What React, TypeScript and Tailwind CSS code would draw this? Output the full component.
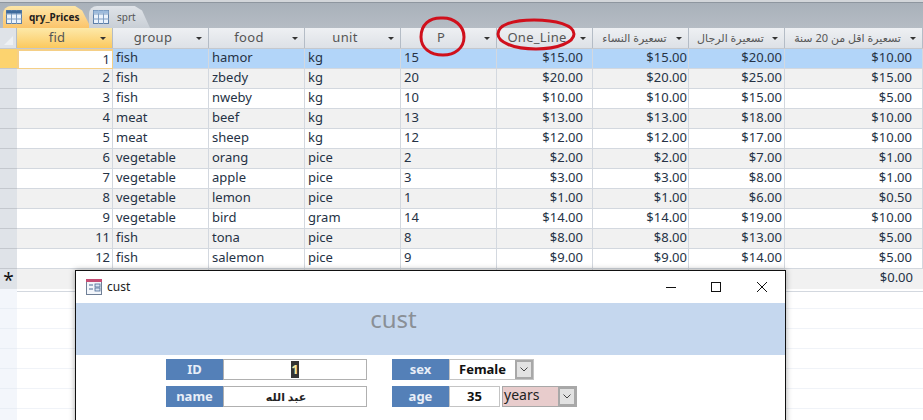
const rows = [
  [1, "fish", "hamor", "kg", "15", "$15.00", "$15.00", "$20.00", "$10.00"],
  [2, "fish", "zbedy", "kg", "20", "$20.00", "$20.00", "$25.00", "$15.00"],
  [3, "fish", "nweby", "kg", "10", "$10.00", "$10.00", "$15.00", "$5.00"],
  [4, "meat", "beef", "kg", "13", "$13.00", "$13.00", "$18.00", "$10.00"],
  [5, "meat", "sheep", "kg", "12", "$12.00", "$12.00", "$17.00", "$10.00"],
  [6, "vegetable", "orang", "pice", "2", "$2.00", "$2.00", "$7.00", "$1.00"],
  [7, "vegetable", "apple", "pice", "3", "$3.00", "$3.00", "$8.00", "$1.00"],
  [8, "vegetable", "lemon", "pice", "1", "$1.00", "$1.00", "$6.00", "$0.50"],
  [9, "vegetable", "bird", "gram", "14", "$14.00", "$14.00", "$19.00", "$10.00"],
  [11, "fish", "tona", "pice", "8", "$8.00", "$8.00", "$13.00", "$5.00"],
  [12, "fish", "salemon", "pice", "9", "$9.00", "$9.00", "$14.00", "$5.00"],
];

const headers = ["group", "food", "unit", "P", "One_Line"];
const arabicHeaders = ["تسعيرة النساء", "تسعيرة الرجال", "تسعيرة اقل من 20 سنة"];

const gridCols = "grid grid-cols-[17px_96px_96px_96px_96px_96px_96px_96px_96px_138px]";

// right padding of each data column, the price columns don't line up evenly
const cellPad = ["pr-[2px]", "pl-[3px]", "pl-[3px]", "pl-[3px]", "pl-[3px]", "pr-[9px]", "pr-[1px]", "pr-[2px]", "pr-[10px]"];

function FilterArrow() {
  return (
    <svg width="6" height="3" viewBox="0 0 6 3" className="shrink-0">
      <path d="M0 0h6L3 3z" fill="#333" />
    </svg>
  );
}

function HeaderCell({ label, active, arabic }: { label: string; active?: boolean; arabic?: boolean }) {
  return (
    <div
      className={`flex h-5 items-center border-r border-[#b4bcc6] pr-[6px] ${
        active ? "bg-gradient-to-b from-[#fde9a8] to-[#fbc95c]" : "bg-gradient-to-b from-[#eef0f3] to-[#dde1e6]"
      }`}
    >
      <span
        className={`flex-1 whitespace-nowrap text-center text-[#555] ${
          arabic ? "text-[11px]" : "pr-[3px] text-[13px] tracking-[0.3px]"
        }`}
      >
        {label}
      </span>
      <FilterArrow />
    </div>
  );
}

function DataRow({ row, index }: { row: (string | number)[]; index: number }) {
  const selected = index === 0;
  const stripe = selected ? "bg-[#b2d5f9]" : index % 2 === 1 ? "bg-[#f1f1f1]" : "bg-white";
  return (
    <div className={`${gridCols} h-5 text-[13px] leading-[17px] text-[#253245] ${stripe}`}>
      <div className={`border-b border-[#c4c8ce] ${selected ? "bg-[#fcd36f]" : "bg-[#dfe3e8]"}`} />
      {row.map((value, i) => {
        const right = i === 0 || i > 4;
        return (
          <div
            key={i}
            className={`truncate border-r border-b border-[#d3d8df] ${cellPad[i]} ${right ? "text-right" : "text-left"} ${
              selected && i === 0 ? "border-2 border-[#f5cf86] bg-white" : ""
            }`}
          >
            {value}
          </div>
        );
      })}
    </div>
  );
}

function TabIcon({ query }: { query?: boolean }) {
  return (
    <svg width="16" height="14" viewBox="0 0 16 14" className="shrink-0">
      <rect x="0.5" y="0.5" width="15" height="13" fill="#eaf2fb" stroke="#5c7fa8" />
      <path d="M0 4h16M0 9h16M5.5 0v14M10.5 0v14" stroke="#7e9dc2" />
      <rect x="0.5" y="0.5" width="15" height="3" fill={query ? "#3d6a9c" : "#9dbbdc"} />
    </svg>
  );
}

function FormIcon() {
  return (
    <svg width="16" height="16" viewBox="0 0 16 16" className="shrink-0">
      <rect x="0.5" y="0.5" width="15" height="15" fill="#f3f6fb" stroke="#6f7f96" />
      <rect x="0" y="0" width="16" height="3" fill="#c44d74" />
      <path d="M3 6h4M3 10h4" stroke="#4a6a94" />
      <rect x="9" y="5" width="5" height="3" fill="#dbe6f5" stroke="#4a6a94" strokeWidth="0.8" />
      <rect x="9" y="9" width="5" height="3" fill="#dbe6f5" stroke="#4a6a94" strokeWidth="0.8" />
    </svg>
  );
}

function Label({ children }: { children: string }) {
  return (
    <div className="flex h-[21px] w-[57px] items-center justify-center bg-[#5480b8] text-[13px] font-bold text-[#e8eef7]">
      {children}
    </div>
  );
}

function DropButton() {
  return (
    <div className="flex h-full w-[18px] shrink-0 items-center justify-center border-2 border-[#a8a8a8] bg-[#e2e2e2]">
      <svg width="8" height="5" viewBox="0 0 8 5" fill="none" stroke="#444">
        <path d="M0.5 0.5L4 4L7.5 0.5" />
      </svg>
    </div>
  );
}

export default function App() {
  return (
    <div className="relative h-[420px] w-[923px] overflow-hidden bg-white font-['Noto_Sans','DejaVu_Sans',sans-serif]">
      <div className="h-[3px] border-b border-[#8e969f] bg-[#d3d6da]" />
      <div className="flex h-[25px] items-end bg-gradient-to-b from-[#a9b1ba] to-[#b5bcc4] pl-[3px]">
        <div className="flex h-[22px] w-[88px] items-center gap-[7px] rounded-tl-lg bg-gradient-to-b from-[#fde6a8] to-[#fbc46a] pl-[3px] [clip-path:polygon(0_100%,0_0,82%_0,90%_20%,100%_100%)]">
          <TabIcon query />
          <span className="text-[10px] font-bold text-[#1d1d1d]">qry_Prices</span>
        </div>
        <div className="-ml-[2px] flex h-[22px] w-[61px] items-center gap-[8px] rounded-tl-lg bg-gradient-to-b from-[#dfe3e8] to-[#c9cfd6] pl-[4px] [clip-path:polygon(0_100%,0_0,75%_0,87%_20%,100%_100%)]">
          <TabIcon />
          <span className="text-[10px] text-[#555]">sprt</span>
        </div>
      </div>

      <div className={`${gridCols} border-b border-[#c4c8ce]`}>
        <div className="flex items-end justify-end border-r border-[#b4bcc6] bg-[#dfe3e8] p-[3px]">
          <svg width="9" height="9" viewBox="0 0 9 9">
            <path d="M9 0v9H0z" fill="#eef1f4" />
          </svg>
        </div>
        <HeaderCell label="fid" active />
        {headers.map((h) => (
          <HeaderCell key={h} label={h} />
        ))}
        {arabicHeaders.map((h) => (
          <HeaderCell key={h} label={h} arabic />
        ))}
      </div>

      {rows.map((row, index) => (
        <DataRow key={index} row={row} index={index} />
      ))}

      <div className={`${gridCols} h-5 bg-[#f1f1f1] text-[13px] leading-[17px] text-[#253245]`}>
        <div className="border-b border-[#c4c8ce] bg-[#dfe3e8] text-center text-[19px] leading-[22px] text-[#111]">*</div>
        <div className="border-r border-b border-[#d3d8df] pr-[2px] text-right">(New)</div>
        {Array.from({ length: 7 }).map((_, i) => (
          <div key={i} className="border-r border-b border-[#d3d8df]" />
        ))}
        <div className="border-b border-[#d3d8df] pr-[10px] text-right">$0.00</div>
      </div>

      {Array.from({ length: 7 }).map((_, i) => (
        <div key={i} className={`${gridCols} h-5`}>
          <div className="border-b border-[#e9eef5] bg-[#f3f6fb]" />
          <div className="col-span-9 border-b border-[#f0f3f8]" />
        </div>
      ))}

      {/* red marks drawn over the header */}
      <svg width="923" height="60" className="pointer-events-none absolute top-0 left-0" fill="none" stroke="#d0101c" strokeWidth="3">
        <path d="M441 18c13-1 23 8 23 19 0 11-9 18-21 18-13 0-22-7-22-18 0-12 8-20 22-19z" />
        <path d="M534 20c22 0 40 5 40 14 0 8-16 15-38 15-23 0-38-7-38-15 0-9 14-14 36-14z" />
      </svg>

      <div className="absolute top-[270px] left-[75px] flex h-[160px] w-[711px] flex-col border border-[#111] bg-white shadow-[0_0_6px_rgba(0,0,0,0.35)]">
        <div className="flex h-[32px] items-center pl-[10px] text-[#222]">
          <FormIcon />
          <span className="ml-[5px] text-[12px]">cust</span>
          <div className="ml-auto flex items-center pr-[18px]">
            <svg width="10" height="10" viewBox="0 0 10 10" stroke="#111">
              <path d="M0 5.5h10" />
            </svg>
            <svg width="10" height="10" viewBox="0 0 10 10" fill="none" stroke="#111" className="ml-[35px]">
              <rect x="0.5" y="0.5" width="9" height="9" />
            </svg>
            <svg width="10" height="10" viewBox="0 0 10 10" stroke="#111" className="ml-[36px]">
              <path d="M0 0l10 10M10 0L0 10" />
            </svg>
          </div>
        </div>
        <div className="flex h-[52px] justify-center bg-[#c5d7ee] pr-[74px]">
          <span className="text-[24px] leading-[32px] text-[#8a8f96]">cust</span>
        </div>
        <div className="mt-1 flex gap-[25px] pl-[90px]">
          <div className="flex flex-col gap-[6px]">
            <div className="flex">
              <Label>ID</Label>
              <div className="flex h-[21px] w-[144px] justify-center border border-[#b0b0b0] py-[1px] text-[13px] font-bold leading-[17px]">
                <span className="bg-[#333] text-[#f6e7a0]">1</span>
              </div>
            </div>
            <div className="flex">
              <Label>name</Label>
              <div className="h-[21px] w-[144px] border border-[#b0b0b0] pr-[18px] text-center text-[11px] font-bold leading-[19px] text-[#222]">
                عبد الله
              </div>
            </div>
          </div>
          <div className="flex flex-col gap-[6px]">
            <div className="flex">
              <Label>sex</Label>
              <div className="flex h-[21px] w-[85px] items-center border border-[#c4c4c4]">
                <span className="flex-1 text-center text-[13px] font-bold text-[#111]">Female</span>
                <DropButton />
              </div>
            </div>
            <div className="flex">
              <Label>age</Label>
              <div className="h-[21px] w-[51px] border border-[#c4c4c4] text-center text-[13px] font-bold leading-[19px] text-[#111]">
                35
              </div>
              <div className="ml-[2px] flex h-[21px] w-[75px] items-center border border-[#a8a8a8] bg-[#e8cccc]">
                <span className="flex-1 pb-[3px] pl-[1px] text-[14px] leading-[16px] text-[#222]">years</span>
                <DropButton />
              </div>
            </div>
          </div>
        </div>
      </div>
    </div>
  );
}
